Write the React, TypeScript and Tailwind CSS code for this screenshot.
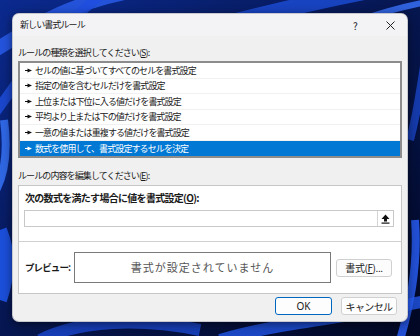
const FONT = "font-['Yu_Gothic_UI','Noto_Sans_CJK_JP',sans-serif]";

const rules = [
  "セルの値に基づいてすべてのセルを書式設定",
  "指定の値を含むセルだけを書式設定",
  "上位または下位に入る値だけを書式設定",
  "平均より上または下の値だけを書式設定",
  "一意の値または重複する値だけを書式設定",
  "数式を使用して、書式設定するセルを決定",
];

const Pointer = ({ white }: { white?: boolean }) => (
  <svg width="7" height="5" viewBox="0 0 7 5" className="shrink-0">
    <rect x="0" y="2" width="3" height="1" fill={white ? "#fff" : "#111"} />
    <polygon points="2.5,0.5 7,2.5 2.5,4.5" fill={white ? "#fff" : "#111"} />
  </svg>
);

const Wallpaper = () => (
  <svg className="absolute inset-0" width="420" height="336" viewBox="0 0 420 336">
    <defs>
      <linearGradient id="bg" x1="0" y1="0" x2="1" y2="1">
        <stop offset="0" stopColor="#0b2a8f" />
        <stop offset="0.5" stopColor="#061650" />
        <stop offset="1" stopColor="#020824" />
      </linearGradient>
    </defs>
    <rect width="420" height="336" fill="url(#bg)" />
    <path d="M-20 60 C 40 20, 80 0, 140 -10" stroke="#2f66ff" strokeWidth="14" fill="none" opacity="0.7" />
    <path d="M-10 120 C 20 80, 40 40, 120 -20" stroke="#1f4fe0" strokeWidth="10" fill="none" opacity="0.8" />
    <path d="M200 30 C 280 10, 340 -5, 430 -20" stroke="#1d4dd8" strokeWidth="16" fill="none" opacity="0.8" />
    <path d="M300 40 C 360 20, 400 5, 440 0" stroke="#3b74ff" strokeWidth="6" fill="none" opacity="0.8" />
    <path d="M-10 200 C 5 180, 8 150, 4 120" stroke="#3a78ff" strokeWidth="8" fill="none" opacity="0.8" />
    <path d="M0 300 C 10 270, 8 250, 0 230" stroke="#1e55e8" strokeWidth="14" fill="none" opacity="0.9" />
    <path d="M40 340 C 80 320, 140 318, 200 330" stroke="#1a47d0" strokeWidth="12" fill="none" opacity="0.8" />
    <path d="M220 340 C 280 322, 340 320, 430 300" stroke="#2256e8" strokeWidth="12" fill="none" opacity="0.8" />
    <path d="M400 340 C 412 300, 418 260, 415 220" stroke="#2a62ff" strokeWidth="8" fill="none" opacity="0.8" />
    <path d="M410 140 C 418 110, 420 90, 425 60" stroke="#1d4cd8" strokeWidth="8" fill="none" opacity="0.7" />
  </svg>
);

export default function App() {
  return (
    <div className={`relative w-[420px] h-[336px] overflow-hidden ${FONT} text-[#1a1a1a]`}>
      <Wallpaper />
      <div className="absolute left-[12px] top-[13px] w-[396px] h-[309px] flex flex-col rounded-[7px] overflow-hidden bg-[#f0f0f0] shadow-[0_2px_10px_rgba(0,0,0,0.5)] border border-[#8a8a9a]/40">
        <div className="h-[22px] flex items-center bg-[#f3f3f6] pl-[7px] pr-[12px] text-[9px] tracking-[-0.9px]">
          <span className="flex-1">新しい書式ルール</span>
          <span className="w-[10px] text-center text-[10px] mr-[26px]">?</span>
          <svg width="9" height="9" viewBox="0 0 9 9">
            <path d="M0.5 0.5 L8.5 8.5 M8.5 0.5 L0.5 8.5" stroke="#222" strokeWidth="1" />
          </svg>
        </div>

        <div className="flex flex-col px-[5px] pt-[11px] text-[9px] tracking-[-0.9px]">
          <div className="h-[12px] leading-[12px]">
            ルールの種類を選択してください(<span className="underline">S</span>):
          </div>
          <div className="mt-[2px] border-2 border-[#8c8c8c] bg-white flex flex-col">
            {rules.map((r, i) => {
              const sel = i === rules.length - 1;
              return (
                <div
                  key={r}
                  className={`h-[15.5px] flex items-center pl-[5px] ${
                    sel ? "bg-[#0078d4] text-white" : "border-b border-[#f1f1f1]"
                  }`}
                >
                  <Pointer white={sel} />
                  <span className="ml-[3px]">{r}</span>
                </div>
              );
            })}
          </div>

          <div className="mt-[12px] h-[12px] leading-[12px]">
            ルールの内容を編集してください(<span className="underline">E</span>):
          </div>
          <div className="mt-[3px] h-[109px] bg-white border border-[#c6c6c6] flex flex-col">
            <div className="pt-[6px] pl-[6px] h-[19px] font-bold leading-[12px] text-[10px] tracking-[-0.7px]">
              次の数式を満たす場合に値を書式設定(<span className="underline">O</span>):
            </div>
            <div className="ml-[5px] mr-[7px] mt-[5px] h-[17px] border border-[#c8c8c8] flex justify-end">
              <div className="w-[16px] h-full border-l border-[#d4d4d4] flex items-center justify-center bg-white">
                <svg width="9" height="10" viewBox="0 0 9 10">
                  <polygon points="4.5,0.5 8.5,5 6,5 6,7.5 3,7.5 3,5 0.5,5" fill="#111" />
                  <rect x="0.5" y="8.5" width="8" height="1.2" fill="#111" />
                </svg>
              </div>
            </div>
            <div className="mt-[14px] h-px bg-[#d0d0d0]" />
            <div className="flex-1 flex items-center pl-[6px] pr-[9px]">
              <span className="w-[49px] font-bold text-[9.5px]">プレビュー:</span>
              <div className="w-[257px] h-[31px] border border-[#7a7a7a] flex items-center justify-center text-[11px] tracking-[1px] text-[#555]">
                書式が設定されていません
              </div>
              <div className="ml-auto w-[56px] h-[18px] rounded-[3px] border border-[#d0d0d0] bg-[#fcfcfc] flex items-center justify-center text-[10px] tracking-[-0.4px]">
                書式(<span className="underline">F</span>)...
              </div>
            </div>
          </div>

          <div className="mt-[3px] flex justify-end gap-[9px] pr-[5px]">
            <div className="w-[57px] h-[18px] rounded-[3px] border border-[#0067c0] bg-[#fdfdfd] flex items-center justify-center text-[10px] tracking-normal font-['Noto_Sans',sans-serif]">
              OK
            </div>
            <div className="w-[56px] h-[18px] rounded-[3px] border border-[#d0d0d0] bg-[#fdfdfd] flex items-center justify-center text-[10px] tracking-[-0.6px]">
              キャンセル
            </div>
          </div>
        </div>
      </div>
    </div>
  );
}
